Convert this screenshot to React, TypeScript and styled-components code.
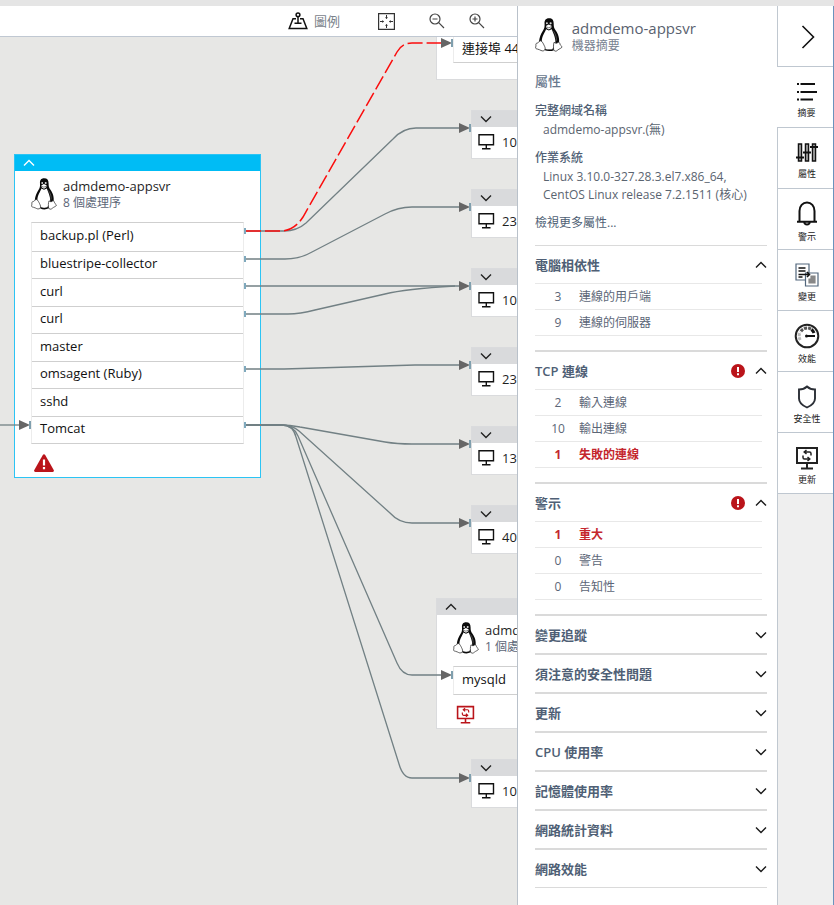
import React from "react";
import styled, { createGlobalStyle } from "styled-components";

const LATIN = `"Open Sans", "Noto Sans CJK TC", sans-serif`;

const GlobalStyle = createGlobalStyle`
  * { box-sizing: border-box; }
  body { margin: 0; background: #e7e7e5; font-family: ${LATIN}; font-size: 13px; color: #1f1f1f; }
  button { font: inherit; color: inherit; border: 0; padding: 0; background: none; cursor: pointer; text-align: left; }
  h1, h2, h3, p, dl, dd, dt, ul { margin: 0; padding: 0; font: inherit; }
  ul { list-style: none; }
  svg { display: block; flex: none; }
`;

const Page = styled.div`
  min-height: 100vh;
  display: flex;
  border-top: 6px solid #e5e5e5;
`;

/* ---------- map ---------- */
const MapPane = styled.main`
  flex: 1;
  min-width: 0;
  display: flex;
  flex-direction: column;
`;

const Toolbar = styled.div`
  height: 31px;
  display: flex;
  align-items: center;
  justify-content: flex-end;
  gap: 34px;
  padding-right: 32px;
  background: #fff;
  border-bottom: 1px solid #c0c8d2;
`;

const ToolButton = styled.button<{ $wide?: boolean }>`
  display: flex;
  align-items: center;
  gap: 6px;
  padding-right: ${(p) => (p.$wide ? "4px" : "0")};
  color: #7b838b;
  font-size: 13px;
  line-height: 18px;
`;

const ToolGroup = styled.div`
  display: flex;
  gap: 24px;
`;

const Canvas = styled.div`
  flex: 1;
  position: relative;
  overflow: hidden;
`;

const Wires = styled.svg`
  position: absolute;
  inset: 0;
  width: 100%;
  height: 100%;
  pointer-events: none;
`;

const Node = styled.section<{ $x: number; $y: number; $w: number; $active?: boolean }>`
  position: absolute;
  left: ${(p) => p.$x}px;
  top: ${(p) => p.$y}px;
  width: ${(p) => p.$w}px;
  background: #fff;
  border: 1px solid ${(p) => (p.$active ? "#2cc4f4" : "#dadbdd")};
`;

const NodeBar = styled.button<{ $active?: boolean }>`
  display: flex;
  align-items: center;
  width: 100%;
  height: 16px;
  padding-left: 8px;
  color: ${(p) => (p.$active ? "#fff" : "#222")};
  background: ${(p) => (p.$active ? "#00bcf5" : "#d9dadc")};
`;

const NodeBody = styled.div<{ $end?: number }>`
  padding: 6px 16px ${(p) => p.$end ?? 0}px;
`;

const NodeHead = styled.div`
  display: flex;
  align-items: center;
  gap: 6px;
  height: 34px;
  margin-bottom: 11px;
`;

const NodeName = styled.h2`
  font-size: 13px;
  line-height: 17px;
  white-space: nowrap;
`;

const NodeNote = styled.p`
  font-size: 12px;
  line-height: 16px;
  color: #5c6677;
  white-space: nowrap;
`;

const ProcessList = styled.ul<{ $h: number }>`
  display: grid;
  grid-auto-rows: 1fr;
  height: ${(p) => p.$h}px;
  border: 1px solid #ececec;
  border-top-color: #cfcfcf;
  border-bottom-color: #cfcfcf;
`;

const Process = styled.li`
  display: flex;
  align-items: center;
  padding: 0 0 3px 8px;
  font-size: 13px;
  line-height: 18px;
  color: #111;
  white-space: nowrap;
  & + & { border-top: 1px solid #cfcfcf; }
`;

const NodeFoot = styled.div`
  display: flex;
  align-items: center;
  height: 28px;
  padding-left: 3px;
  margin-top: 5px;
`;

const ClientRow = styled.div`
  display: flex;
  align-items: center;
  gap: 7px;
  height: 31px;
  padding: 0 0 2px 6px;
  white-space: nowrap;
`;

/* ---------- details ---------- */
const Details = styled.aside`
  flex: none;
  width: 261px;
  padding: 0 10px 0 17px;
  background: #fff;
  border-left: 1px solid #b9c1ca;
  border-right: 1px solid #c0c8d0;
  color: #4f5f75;
`;

const DetailsHead = styled.header`
  display: flex;
  gap: 9px;
  padding-top: 12px;
  height: 66px;
`;

const Title = styled.h1`
  font-size: 15px;
  line-height: 20px;
  color: #5a6270;
`;

const Subtitle = styled.p`
  font-size: 12px;
  line-height: 16px;
  color: #77818f;
`;

const Caption = styled.h2`
  font-size: 13px;
  line-height: 18px;
  font-weight: 500;
  color: #67778d;
  margin-bottom: 12px;
`;

const Facts = styled.dl`
  line-height: 18px;
`;

const Term = styled.dt`
  margin-bottom: 1px;
  font-size: 12px;
  font-weight: 500;
`;

const Value = styled.dd`
  padding-left: 8px;
  margin-bottom: 10px;
  font-size: 12px;
  color: #5a6470;
  white-space: nowrap;
`;

const More = styled.a`
  display: block;
  margin-bottom: 13px;
  font-size: 12px;
  line-height: 18px;
  color: #4f5f75;
  text-decoration: none;
`;

const Group = styled.section<{ $open?: boolean }>`
  border-top: 2px solid #dadada;
  padding-bottom: ${(p) => (p.$open ? "14px" : "0")};
  &:first-of-type { border-top-width: 1px; }
  &:last-child { border-bottom: 1px solid #dadada; }
`;

const GroupHead = styled.button`
  display: flex;
  align-items: center;
  gap: 10px;
  width: 100%;
  height: 37px;
  font-size: 13px;
  font-weight: 600;
  color: #1a1a1a;
`;

const GroupTitle = styled.span`
  flex: 1;
  color: #4f5f75;
`;

const Counts = styled.ul`
  margin-right: 5px;
  border-top: 1px solid #e8e8e8;
`;

const CountRow = styled.li<{ $bad?: boolean }>`
  display: flex;
  align-items: center;
  gap: 11px;
  height: 26px;
  padding-left: 13px;
  border-bottom: 1px solid #e8e8e8;
  font-size: 12px;
  line-height: 18px;
  color: ${(p) => (p.$bad ? "#c4262e" : "#5c6677")};
  font-weight: ${(p) => (p.$bad ? 700 : 400)};
`;

const Count = styled.span`
  width: 20px;
  text-align: center;
`;

/* ---------- rail ---------- */
const Rail = styled.nav`
  flex: none;
  width: 56px;
  background: #efefef;
  border-right: 1px solid #6a93bd;
`;

const RailButton = styled.button<{ $on?: boolean; $plain?: boolean }>`
  display: flex;
  flex-direction: column;
  align-items: center;
  justify-content: center;
  gap: 3px;
  width: 100%;
  height: 61px;
  padding: ${(p) => (p.$plain ? "1px 0 0 4px" : "6px 0 0 3px")};
  background: #fff;
  border-bottom: 1px solid #bfc7d0;
  font-size: 9px;
  line-height: 14px;
  color: #222;
  ${(p) => p.$on && "margin-left: -1px; width: calc(100% + 1px);"}
`;

const Tux = ({ size = 34 }: { size?: number }) => (
  <svg width={(size * 26) / 32} height={size} viewBox="0 0 26 32" aria-hidden="true">
    <path
      d="M13.200 0.300C9.800 0.300 8.800 2.500 9 5.500C9.200 8.800 8.800 10 7.300 12.300C5.500 15 4.200 18.500 3.800 22L7.500 29.500H18L22.500 24C23.400 19.500 21.800 15 19.500 11.800C17.800 9.500 17.600 8 17.600 5.500C17.600 2 16.300 0.300 13.200 0.300Z"
      fill="#0a0a0a"
    />
    <path
      d="M10.400 10.500C9.500 13.500 6.400 17 6.400 22C6.400 27 9 29.700 12.800 29.700C16.800 29.700 19 27.500 19.200 23C19.400 18 17 14 15.800 10.500L13 11.700Z"
      fill="#fff"
    />
    <path d="M10.300 7.500L12.800 6L15.600 7.300L15.300 9.300L13 10.800L10.800 9.500Z" fill="#fff" />
    <circle cx="11.200" cy="5" r="0.900" fill="#ddd" />
    <circle cx="14.700" cy="5" r="1" fill="#ddd" />
    <path d="M10.600 8.300L12.900 9.200L15.400 8.200" fill="none" stroke="#333" strokeWidth="0.600" />
    <path d="M17.500 12.500C19.500 15.500 20.500 18.500 20 21.500" fill="none" stroke="#888" strokeWidth="0.500" />
    <path
      d="M5 21.500C3.800 21.800 3.500 23.500 1.500 23.800C0.200 24.100 1.300 25.800 0.700 27.200C0.200 28.600 0.900 29 2.500 29.300C5.100 29.900 6.300 31.500 8.200 30.800C9.700 30.200 9.900 28.500 9.200 27C8.200 25 6.700 21.200 5 21.500Z"
      fill="#fff"
      stroke="#222"
      strokeWidth="0.700"
    />
    <path
      d="M18 22.800C17.200 25 17.300 28 17.600 29.800C18.100 31.600 20.100 31.600 21.400 30.200C22.800 28.900 25.200 28.400 25.400 27.300C25.500 26.400 23.900 26.100 23.600 24.800C23.400 23.500 22.800 22.600 21.800 22.800C20.700 24 19.200 24 18 22.800Z"
      fill="#fff"
      stroke="#222"
      strokeWidth="0.700"
    />
    <path d="M9.500 29.800C11.500 30.700 15.500 30.700 17.500 29.700" fill="none" stroke="#0a0a0a" strokeWidth="1.400" />
  </svg>
);

const Chevron = ({ up }: { up?: boolean }) => (
  <svg width="12" height="8" viewBox="0 0 12 8" fill="none" stroke="currentColor" strokeWidth="1.400" aria-hidden="true">
    <path d={up ? "M1 6.500L6 1.500l5 5" : "M1 1.500l5 5 5-5"} />
  </svg>
);

const Monitor = () => (
  <svg width="17" height="17" viewBox="0 0 17 17" fill="none" stroke="#111" strokeWidth="1.400" aria-hidden="true">
    <path d="M1 1.700h14.500v10H1zM8.300 11.700v4M4 15.700h8.500" />
  </svg>
);

const UpdateMonitor = ({ color = "#222", size = 24 }: { color?: string; size?: number }) => (
  <svg width={size} height={size} viewBox="0 0 24 24" fill="none" stroke={color} strokeWidth="2" aria-hidden="true">
    <path d="M2 2h20v15H2zM12 17v5M6 22.500h12" />
    <path d="M9.500 6H14.500Q16 6 16 7.500V9.500M11.500 4L9.200 6L11.500 8M14.500 13H9.500Q8 13 8 11.500V9.500M12.500 11L14.800 13L12.500 15" strokeWidth="1.500" />
  </svg>
);

const AlertDot = () => (
  <svg width="14" height="14" viewBox="0 0 14 14" role="img" aria-label="!">
    <circle cx="7" cy="7" r="7" fill="#ba141a" />
    <path d="M7 3v5M7 9.300v2" stroke="#fff" strokeWidth="2" />
  </svg>
);

const Warning = () => (
  <svg width="20" height="18" viewBox="0 0 20 18" aria-hidden="true">
    <path d="M8.800.9c.6-1 1.800-1 2.400 0l8.500 15.200c.5.900 0 1.900-1 1.900H1.300c-1 0-1.500-1-1-1.900z" fill="#ba141a" />
    <path d="M10 5.500v6M10 13v2.200" stroke="#fff" strokeWidth="2.200" />
  </svg>
);

const LegendIcon = () => (
  <svg width="20" height="18" viewBox="0 0 20 18" fill="none" stroke="#111" strokeWidth="1.500" aria-hidden="true">
    <circle cx="10" cy="2.800" r="1.900" />
    <path d="M10 4.700V11.500M8 6.800H5L1.200 16.500H18.800L15 6.800H12M6.500 11.300H13.500" />
  </svg>
);

const FitIcon = () => (
  <svg width="17" height="17" viewBox="0 0 17 17" fill="none" stroke="#333" aria-hidden="true">
    <path d="M.6.600h15.800v15.800H.6z" strokeWidth="1.200" />
    <path d="M8.500 2v3.500M8.500 15v-3.500M2 8.500h3.500M15 8.500h-3.500" />
    <path d="M7 4.300h3L8.500 6zM7 12.700h3L8.500 11zM4.300 7v3L6 8.500zM12.700 7v3L11 8.500z" fill="#333" stroke="none" />
  </svg>
);

const ZoomIcon = ({ plus }: { plus?: boolean }) => (
  <svg width="16" height="16" viewBox="0 0 16 16" fill="none" stroke="#444" strokeWidth="1.200" aria-hidden="true">
    <circle cx="6" cy="6" r="5" />
    <path d={plus ? "M9.700 9.700L15 15M3.500 6h5M6 3.500v5" : "M9.700 9.700L15 15M3.500 6h5"} />
  </svg>
);

const ListIcon = () => (
  <svg width="22" height="22" viewBox="0 0 22 22" stroke="#111" strokeWidth="2" aria-hidden="true">
    <path d="M1 3h2M4.500 3H19M1 11h2M4.500 11H21M1 18.500h2M4.500 18.500H17" />
  </svg>
);

const SlidersIcon = () => (
  <svg width="22" height="22" viewBox="0 0 22 22" fill="none" stroke="#111" strokeWidth="1.500" aria-hidden="true">
    <path d="M2.500 2h3v17h-3zM9.500 2h3v17h-3zM16.500 2h3v17h-3z" fill="#bbb" />
    <path d="M0 15.500h8M7 10.500h8M14 5h8" strokeWidth="2" />
  </svg>
);

const BellIcon = () => (
  <svg width="22" height="26" viewBox="0 0 22 26" fill="none" stroke="#111" strokeWidth="2" aria-hidden="true">
    <path d="M3.500 20.500V10c0-5 3.200-8.500 7.500-8.500s7.500 3.500 7.500 8.500v10.500M1 20.800h20M8.200 21c.3 3.300 5.300 3.300 5.600 0" />
  </svg>
);

const ChangeIcon = () => (
  <svg width="24" height="24" viewBox="0 0 24 24" fill="#fff" stroke="#52677c" strokeWidth="1.200" aria-hidden="true">
    <path d="M1 1h13v16H1z" />
    <path d="M3.500 5h7M3.500 8h7M3.500 14h4" stroke="#111" strokeWidth="1.500" />
    <path d="M10.500 10h12.500v13H10.500z" />
    <path d="M16 13h4v7h-6v-4h2z" fill="#888" stroke="#888" />
    <path d="M3.500 11.500H14M12 9l2.500 2.500L12 14" fill="none" stroke="#111" strokeWidth="1.500" />
  </svg>
);

const GaugeIcon = () => (
  <svg width="26" height="26" viewBox="0 0 26 26" fill="none" aria-hidden="true">
    <circle cx="13" cy="13" r="11.300" stroke="#222" strokeWidth="2" />
    <path d="M6.300 17a7.500 7.500 0 0 1 0-8" stroke="#bbb" strokeWidth="3" strokeDasharray="3 1" />
    <path d="M7 8.300a7.500 7.500 0 0 1 11-1.500" stroke="#555" strokeWidth="3" strokeDasharray="3 1" />
    <path d="M17.500 6.500a7.500 7.500 0 0 1 2.500 3.500" stroke="#111" strokeWidth="3" />
    <path d="M12 13h9" stroke="#111" strokeWidth="2" />
    <circle cx="12.500" cy="13" r="1.500" fill="#111" />
  </svg>
);

const ShieldIcon = () => (
  <svg width="20" height="24" viewBox="0 0 20 24" fill="none" stroke="#2b2f36" strokeWidth="1.900" aria-hidden="true">
    <path d="M10 1.500C8.500 3 5 4.500 2 4.500v9c0 4 3.500 7 8 9 4.500-2 8-5 8-9v-9c-3 0-6.500-1.500-8-3z" />
  </svg>
);

const CloseIcon = () => (
  <svg width="14" height="24" viewBox="0 0 14 24" fill="none" stroke="#111" strokeWidth="1.600" aria-hidden="true">
    <path d="M1.500 1l11 11-11 11" />
  </svg>
);

const WIRES = [
  "M246 194H284Q297 194 306 186L393 102Q403 91 416 91H460",
  "M246 222H285Q300 222 312 215L385 177Q398 170 412 170H460",
  "M246 249H460",
  "M246 277H288Q300 277 315 273L385 257Q405 252 455 249",
  "M246 332H284L415 328H460",
  "M246 388H280Q290 388 300 390L385 405Q397 407 412 407H460",
  "M246 388H282Q292 388 299 394L390 476Q399 486 412 486H460",
  "M246 388H282Q293 388 298 399L397 626Q402 638 412 638H442",
  "M246 388H282Q293 388 296 400L399 727Q403 741 412 741H460",
  "M0 388H20",
];

const ARROWS: [number, number][] = [
  [452, 6], [470, 91], [470, 170], [470, 249], [470, 328], [470, 407], [470, 486], [452, 638], [470, 741], [30, 388],
];

const PORTS = [194, 222, 249, 277, 332, 388];

const CLIENTS = [
  { y: 73, name: "10" },
  { y: 152, name: "23" },
  { y: 231, name: "10" },
  { y: 310, name: "23" },
  { y: 389, name: "13" },
  { y: 468, name: "40" },
  { y: 722, name: "10" },
];

const PROCESSES = ["backup.pl (Perl)", "bluestripe-collector", "curl", "curl", "master", "omsagent (Ruby)", "sshd", "Tomcat"];

type Item = { n: string; label: string; bad?: boolean };
const GROUPS: { title: string; alert?: boolean; rows?: Item[] }[] = [
  { title: "電腦相依性", rows: [{ n: "3", label: "連線的用戶端" }, { n: "9", label: "連線的伺服器" }] },
  {
    title: "TCP 連線",
    alert: true,
    rows: [{ n: "2", label: "輸入連線" }, { n: "10", label: "輸出連線" }, { n: "1", label: "失敗的連線", bad: true }],
  },
  {
    title: "警示",
    alert: true,
    rows: [{ n: "1", label: "重大", bad: true }, { n: "0", label: "警告" }, { n: "0", label: "告知性" }],
  },
  { title: "變更追蹤" },
  { title: "須注意的安全性問題" },
  { title: "更新" },
  { title: "CPU 使用率" },
  { title: "記憶體使用率" },
  { title: "網路統計資料" },
  { title: "網路效能" },
];

const RAIL = [
  { label: "摘要", icon: <ListIcon />, on: true },
  { label: "屬性", icon: <SlidersIcon /> },
  { label: "警示", icon: <BellIcon /> },
  { label: "變更", icon: <ChangeIcon /> },
  { label: "效能", icon: <GaugeIcon /> },
  { label: "安全性", icon: <ShieldIcon /> },
  { label: "更新", icon: <UpdateMonitor /> },
];

export default function App() {
  return (
    <>
      <GlobalStyle />
      <Page>
        <MapPane>
          <Toolbar>
            <ToolButton $wide><LegendIcon />圖例</ToolButton>
            <ToolButton aria-label="縮放至適當大小"><FitIcon /></ToolButton>
            <ToolGroup>
              <ToolButton aria-label="縮小"><ZoomIcon /></ToolButton>
              <ToolButton aria-label="放大"><ZoomIcon plus /></ToolButton>
            </ToolGroup>
          </Toolbar>
          <Canvas>
            <Node $x={14} $y={117} $w={247} $active>
              <NodeBar $active aria-label="摺疊"><Chevron up /></NodeBar>
              <NodeBody>
                <NodeHead>
                  <Tux size={32} />
                  <div>
                    <NodeName>admdemo-appsvr</NodeName>
                    <NodeNote>8 個處理序</NodeNote>
                  </div>
                </NodeHead>
                <ProcessList $h={222}>
                  {PROCESSES.map((p, i) => <Process key={i}>{p}</Process>)}
                </ProcessList>
                <NodeFoot><Warning /></NodeFoot>
              </NodeBody>
            </Node>

            <Node $x={436} $y={-70} $w={247}>
              <NodeBar aria-label="摺疊"><Chevron up /></NodeBar>
              <NodeBody $end={16}>
                <NodeHead />
                <ProcessList $h={28}><Process>連接埠 44</Process></ProcessList>
              </NodeBody>
            </Node>

            <Node $x={436} $y={561} $w={247}>
              <NodeBar aria-label="摺疊"><Chevron up /></NodeBar>
              <NodeBody>
                <NodeHead>
                  <Tux size={32} />
                  <div>
                    <NodeName>admd</NodeName>
                    <NodeNote>1 個處</NodeNote>
                  </div>
                </NodeHead>
                <ProcessList $h={29}><Process>mysqld</Process></ProcessList>
                <NodeFoot><UpdateMonitor color="#ba141a" size={19} /></NodeFoot>
              </NodeBody>
            </Node>

            {CLIENTS.map((c) => (
              <Node key={c.y} $x={471} $y={c.y} $w={180}>
                <NodeBar aria-label="展開"><Chevron /></NodeBar>
                <ClientRow><Monitor />{c.name}</ClientRow>
              </Node>
            ))}

            <Wires aria-hidden="true">
              <g fill="none" stroke="#728084" strokeWidth="1.300">
                {WIRES.map((d) => <path key={d} d={d} />)}
              </g>
              <path d="M246 194H280Q294 194 303 180L397 15Q402 6 412 6H441" fill="none" stroke="#fb0d0d" strokeWidth="1.500" strokeDasharray="15 4" />
              {ARROWS.map(([x, y]) => (
                <g key={`${x}-${y}`}>
                  <path d={`M${x - 11} ${y - 5}v10l11-5z`} fill="#666" />
                  <path d={`M${x} ${y - 4}v8`} stroke="#7f9fae" strokeWidth="2" />
                </g>
              ))}
              {PORTS.map((y) => <path key={y} d={`M245 ${y - 3}v6`} stroke="#7fa9bd" strokeWidth="2" />)}
            </Wires>
          </Canvas>
        </MapPane>

        <Details>
          <DetailsHead>
            <Tux size={34} />
            <div>
              <Title>admdemo-appsvr</Title>
              <Subtitle>機器摘要</Subtitle>
            </div>
          </DetailsHead>
          <Caption>屬性</Caption>
          <Facts>
            <Term>完整網域名稱</Term>
            <Value>admdemo-appsvr.(無)</Value>
            <Term>作業系統</Term>
            <Value>Linux 3.10.0-327.28.3.el7.x86_64,<br />CentOS Linux release 7.2.1511 (核心)</Value>
          </Facts>
          <More href="#more">檢視更多屬性...</More>
          {GROUPS.map((g) => (
            <Group key={g.title} $open={!!g.rows}>
              <GroupHead aria-expanded={!!g.rows}>
                <GroupTitle>{g.title}</GroupTitle>
                {g.alert && <AlertDot />}
                <Chevron up={!!g.rows} />
              </GroupHead>
              {g.rows && (
                <Counts>
                  {g.rows.map((r) => (
                    <CountRow key={r.label} $bad={r.bad}><Count>{r.n}</Count>{r.label}</CountRow>
                  ))}
                </Counts>
              )}
            </Group>
          ))}
        </Details>

        <Rail>
          <RailButton $plain aria-label="關閉"><CloseIcon /></RailButton>
          {RAIL.map((r) => (
            <RailButton key={r.label} $on={r.on}>{r.icon}{r.label}</RailButton>
          ))}
        </Rail>
      </Page>
    </>
  );
}
